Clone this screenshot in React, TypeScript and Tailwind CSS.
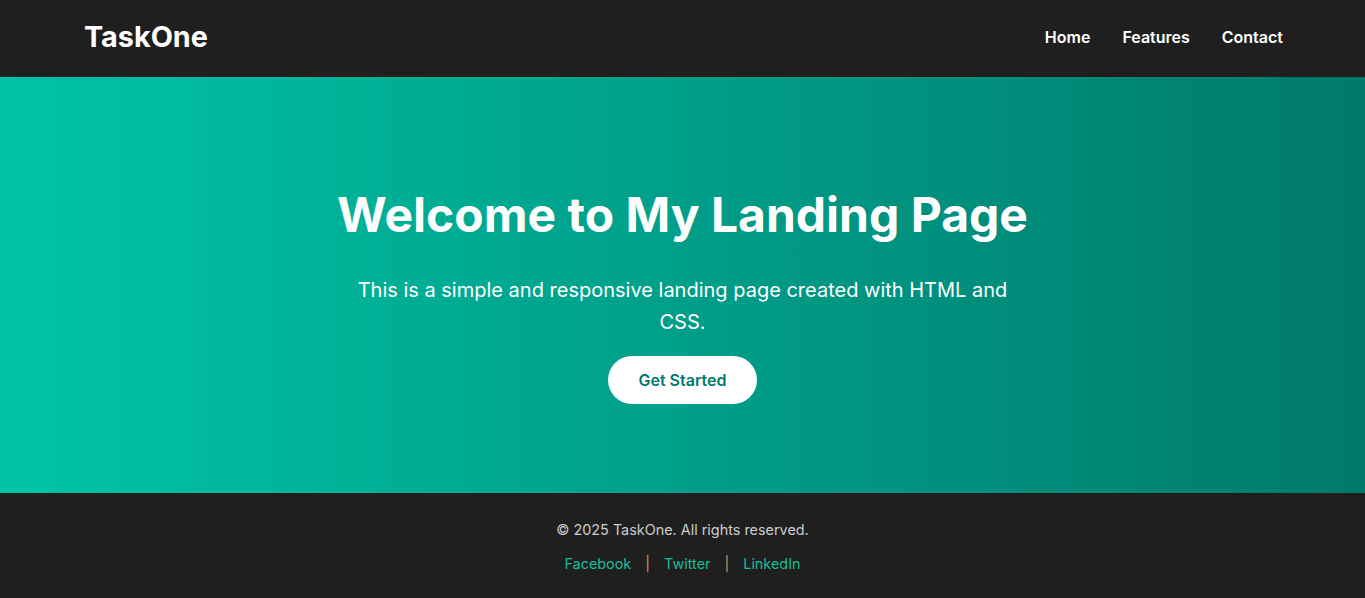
import React from 'react';

const navLinks = ['Home', 'Features', 'Contact'];
const socialLinks = ['Facebook', 'Twitter', 'LinkedIn'];

const Header: React.FC = () => {
  return (
    <header className="flex items-center justify-between h-[77px] pb-[3px] px-[82px] bg-[#1f1f1f]">
      <div className="text-[28.8px] font-bold text-white pl-[2px]">TaskOne</div>
      <nav className="flex items-center gap-[32px]">
        {navLinks.map((link) => (
          <a key={link} href="#" className="text-[16px] font-semibold text-white">
            {link}
          </a>
        ))}
      </nav>
    </header>
  );
};

const Hero: React.FC = () => {
  return (
    <section className="flex flex-col items-center text-center text-white pt-[109px] pb-[89px] bg-[linear-gradient(90deg,#00c4a7,#00796b)]">
      <h1 className="text-[48px] leading-[58px] font-bold">Welcome to My Landing Page</h1>
      <p className="mt-[30px] max-w-[660px] text-[20px] leading-[32px]">
        This is a simple and responsive landing page created with HTML and CSS.
      </p>
      <button className="mt-[18px] h-[48px] px-[30px] rounded-full bg-white text-[#00796b] text-[16px] font-semibold">
        Get Started
      </button>
    </section>
  );
};

const Footer: React.FC = () => {
  return (
    <footer className="flex flex-col items-center h-[105px] pt-[27px] bg-[#1f1f1f]">
      <p className="text-[14.4px] leading-[20px] text-[#cccccc]">© 2025 TaskOne. All rights reserved.</p>
      <div className="flex items-center mt-[14px] text-[14.4px] leading-[20px]">
        {socialLinks.map((link, i) => (
          <React.Fragment key={link}>
            {i > 0 && <span className="mx-[14px] text-[#c49c5e]">|</span>}
            <a href="#" className="text-[#1abc9c]">
              {link}
            </a>
          </React.Fragment>
        ))}
      </div>
    </footer>
  );
};

export default function App() {
  return (
    <div className="min-h-screen bg-[#1f1f1f] font-['Inter',sans-serif]">
      <Header />
      <Hero />
      <Footer />
    </div>
  );
}
